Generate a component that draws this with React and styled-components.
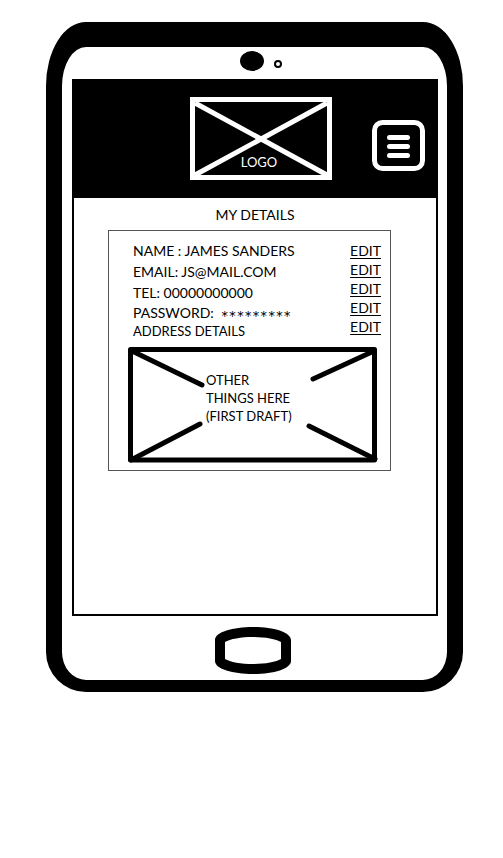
import React from "react";
import styled, { createGlobalStyle } from "styled-components";

const GlobalStyle = createGlobalStyle`
  *, *::before, *::after { box-sizing: border-box; }
  body {
    margin: 0;
    background: #fff;
    color: #000;
    font-family: Lato, "Open Sans", sans-serif;
    font-size: 14px;
  }
`;

const Page = styled.div`
  min-height: 100vh;
  padding: 22px 40px 22px 46px;
`;

const Phone = styled.div`
  border: solid #000;
  border-width: 25px 16px 12px;
  border-radius: 40px 40px 40px 40px / 64px 64px 40px 40px;
  background: #fff;
`;

const SensorBar = styled.div`
  display: flex;
  justify-content: center;
  height: 32px;
  padding: 4px 0 0 13px;
  gap: 10px;
`;

const Camera = styled.span`
  width: 24px;
  height: 20px;
  border-radius: 50%;
  background: #000;
`;

const Sensor = styled.span`
  width: 8px;
  height: 8px;
  margin-top: 9px;
  border: 2px solid #000;
  border-radius: 50%;
`;

const Screen = styled.div`
  min-height: 537px;
  margin: 0 9px 0 10px;
  border: 2px solid #000;
`;

const Header = styled.header`
  display: grid;
  grid-template-columns: 1fr auto 1fr;
  align-items: start;
  height: 117px;
  padding: 16px 11px 0 23px;
  background: #000;
  color: #fff;
`;

const Logo = styled.a`
  display: grid;
  grid-column: 2;
  color: inherit;
  text-decoration: none;

  > * { grid-area: 1 / 1; }
`;

const LogoText = styled.span`
  align-self: end;
  justify-self: center;
  padding: 0 4px 10px 0;
  font-size: 13px;
  line-height: 16px;
`;

const MenuButton = styled.button`
  display: flex;
  justify-self: end;
  margin: 23px 0 0;
  padding: 0;
  border: 0;
  background: none;
  color: inherit;
  cursor: pointer;
`;

const Title = styled.h1`
  margin: 8px 0 6px;
  font-size: 14px;
  font-weight: 400;
  line-height: 18px;
  text-align: center;
`;

const Card = styled.section`
  margin: 0 45px 0 34px;
  padding: 9px 9px 7px 19px;
  border: 1px solid #555;
`;

const Details = styled.div`
  display: flex;
  justify-content: space-between;
  padding-left: 5px;
`;

const Fields = styled.ul`
  margin: 0;
  padding: 0;
  list-style: none;
`;

const Field = styled.li`
  height: ${(p) => (p.$tall ? "21px" : "19px")};
  font-size: ${(p) => (p.$small ? "13px" : "14px")};
  line-height: ${(p) => (p.$tall ? "21px" : "19px")};
  white-space: pre;
`;

const Mask = styled.span`
  font-family: "DejaVu Sans Mono", monospace;
  font-size: 13px;
`;

const Edits = styled.div`
  display: flex;
  flex-direction: column;
  padding-top: 1px;
`;

const EditLink = styled.a`
  color: inherit;
  line-height: 19px;
  text-decoration: underline;
  text-decoration-thickness: 1px;
  text-underline-offset: 2px;
  text-decoration-skip-ink: none;
`;

const Placeholder = styled.div`
  display: grid;
  margin-top: 6px;
  padding-right: 3px;

  > * { grid-area: 1 / 1; }
`;

const PlaceholderArt = styled.svg`
  display: block;
  width: 100%;
`;

const PlaceholderText = styled.p`
  margin: 24px 0 0 78px;
  font-size: 13px;
  line-height: 18px;
`;

const HomeBar = styled.div`
  display: flex;
  justify-content: center;
  padding: 11px 3px 6px 0;
`;

const HomeButton = styled.button`
  display: flex;
  padding: 0;
  border: 0;
  background: none;
  cursor: pointer;
`;

const fields = [
  { text: "NAME : JAMES SANDERS", label: "name", tall: true },
  { text: "EMAIL: JS@MAIL.COM", label: "email", tall: true },
  { text: "TEL: 00000000000", label: "telephone", tall: true },
  { text: "PASSWORD:  ", mask: "∗∗∗∗∗∗∗∗∗", label: "password" },
  { text: "ADDRESS DETAILS", label: "address", small: true },
];

export default function App() {
  return (
    <Page>
      <GlobalStyle />
      <Phone>
        <SensorBar>
          <Camera />
          <Sensor />
        </SensorBar>
        <Screen>
          <Header>
            <Logo href="#">
              <svg width="142" height="83" viewBox="0 0 142 83" fill="none" stroke="#fff" strokeWidth="5" aria-hidden="true">
                <rect x="2.5" y="2.5" width="137" height="78" />
                <path d="M5 6 137 78M5 78 137 6" />
              </svg>
              <LogoText>LOGO</LogoText>
            </Logo>
            <MenuButton aria-label="Menu">
              <svg width="53" height="51" viewBox="0 0 53 51" fill="none" stroke="#fff" strokeWidth="5" strokeLinecap="round">
                <rect x="2.5" y="2.5" width="48" height="46" rx="8" />
                <path d="M17.5 17.5h18M17.5 26.5h18M17.5 35.5h18" />
              </svg>
            </MenuButton>
          </Header>
          <main>
            <Title>MY DETAILS</Title>
            <Card>
              <Details>
                <Fields>
                  {fields.map((f) => (
                    <Field key={f.label} $tall={f.tall} $small={f.small}>
                      {f.text}
                      {f.mask && <Mask>{f.mask}</Mask>}
                    </Field>
                  ))}
                </Fields>
                <Edits>
                  {fields.map((f) => (
                    <EditLink key={f.label} href={`#${f.label}`}>EDIT</EditLink>
                  ))}
                </Edits>
              </Details>
              <Placeholder>
                <PlaceholderArt viewBox="0 0 250 116" fill="none" stroke="#000" strokeWidth="5" strokeLinecap="round" aria-hidden="true">
                  <path d="M2.5 2.5H246.500V113H2.500Z" strokeLinejoin="round" />
                  <path d="M4 4 74 38M246 4 185 32M3 113 72 77M247 112 181 79" />
                </PlaceholderArt>
                <PlaceholderText>
                  OTHER<br />
                  THINGS HERE<br />
                  (FIRST DRAFT)
                </PlaceholderText>
              </Placeholder>
            </Card>
          </main>
        </Screen>
        <HomeBar>
          <HomeButton aria-label="Home">
            <svg width="76" height="47" viewBox="0 0 76 47">
              <path
                fillRule="evenodd"
                d="M0 13C0 5 18 0 38 0S76 5 76 13V34C76 42 58 47 38 47S0 42 0 34ZM10 15V32C15 35 26 37 38 37S61 35 66 32V15C61 12 50 10 38 10S15 12 10 15Z"
              />
            </svg>
          </HomeButton>
        </HomeBar>
      </Phone>
    </Page>
  );
}
